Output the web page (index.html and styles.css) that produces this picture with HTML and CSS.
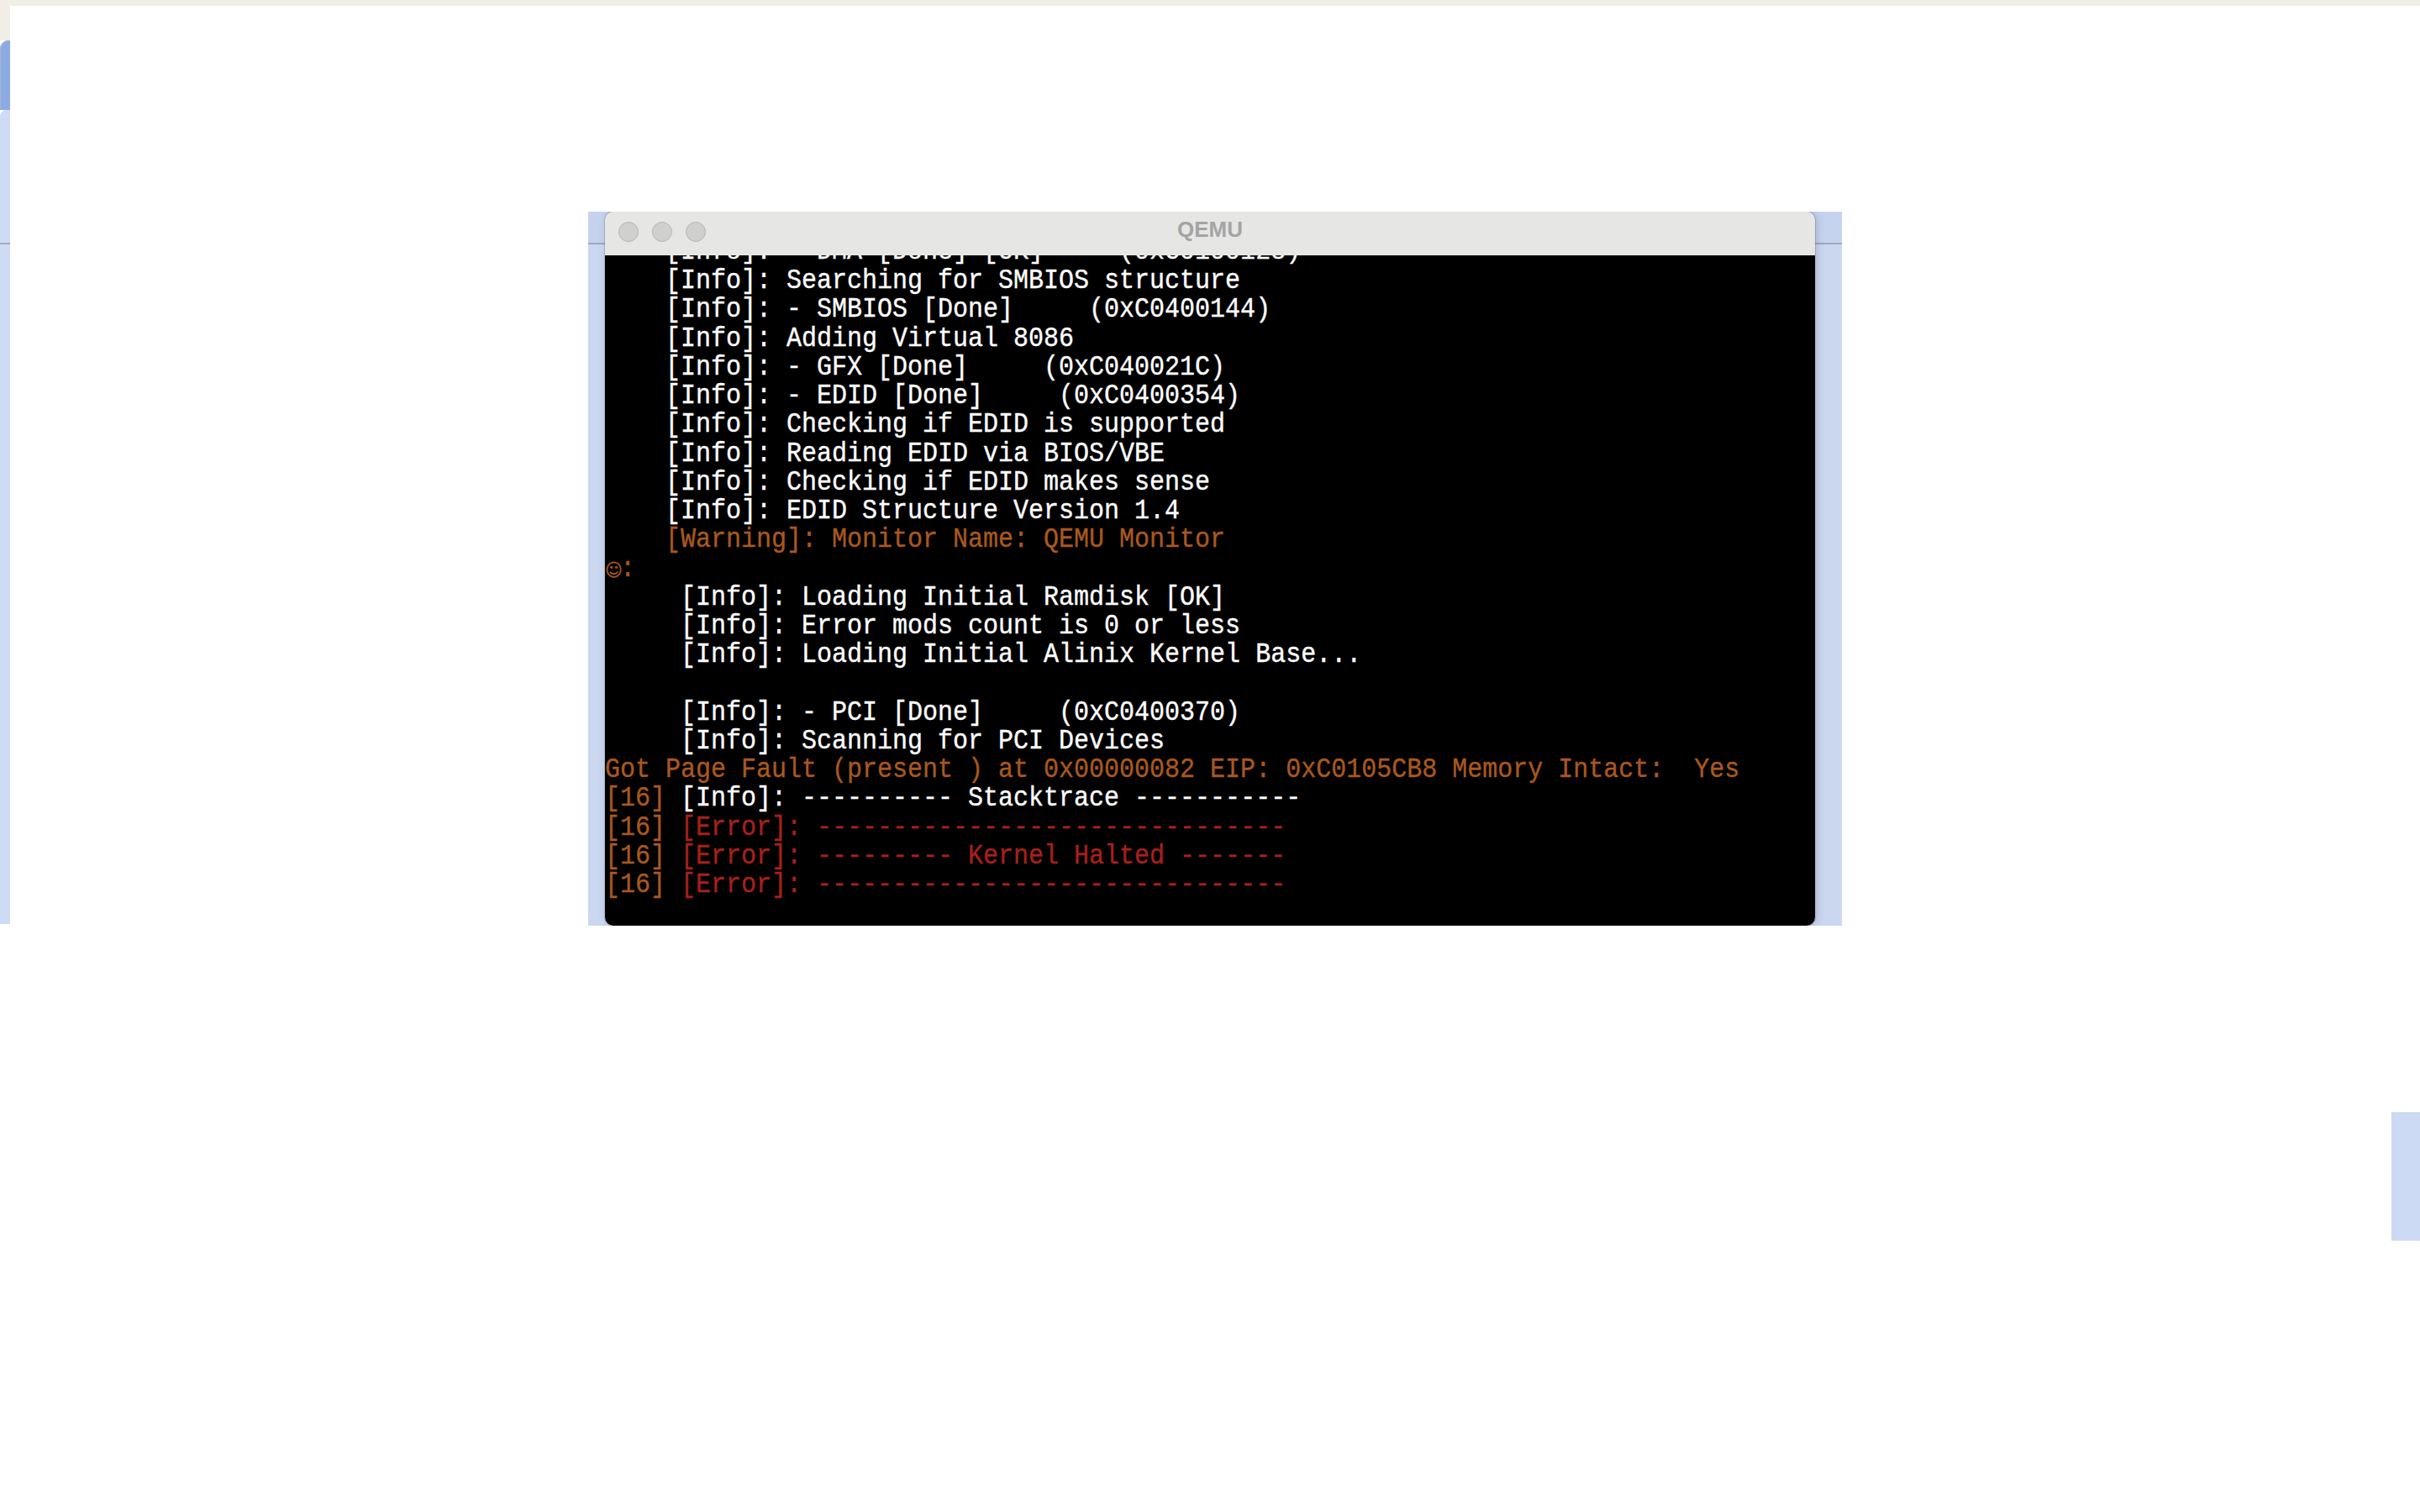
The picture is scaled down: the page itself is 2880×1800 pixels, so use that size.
FILE: index.html
```html
<!DOCTYPE html>
<html lang="en">
<head>
<meta charset="utf-8">
<title>QEMU</title>
<link rel="stylesheet" href="styles.css">
</head>
<body>
<div class="topbar"></div>
<div class="stage">
  <div class="leftstrip">
    <div class="ls-beige"></div>
    <div class="ls-dark"></div>
    <div class="ls-light"></div>
  </div>
  <div class="main">
    <div class="backdrop">
      <div class="window">
        <div class="titlebar">
          <div class="lights">
            <span class="light"></span>
            <span class="light"></span>
            <span class="light"></span>
          </div>
          <div class="title">QEMU</div>
          <div class="spacer"></div>
        </div>
        <div class="terminal">
          <div class="lines">
            <div class="ln ln-top">    [Info]: - DMA [Done] [OK]     (0xC0100128)</div>
            <div class="ln">    [Info]: Searching for SMBIOS structure</div>
            <div class="ln">    [Info]: - SMBIOS [Done]     (0xC0400144)</div>
            <div class="ln">    [Info]: Adding Virtual 8086</div>
            <div class="ln">    [Info]: - GFX [Done]     (0xC040021C)</div>
            <div class="ln">    [Info]: - EDID [Done]     (0xC0400354)</div>
            <div class="ln">    [Info]: Checking if EDID is supported</div>
            <div class="ln">    [Info]: Reading EDID via BIOS/VBE</div>
            <div class="ln">    [Info]: Checking if EDID makes sense</div>
            <div class="ln">    [Info]: EDID Structure Version 1.4</div>
            <div class="ln warn">    [Warning]: Monitor Name: QEMU Monitor</div>
            <div class="ln warn"><span class="smiley">☺</span>:</div>
            <div class="ln">     [Info]: Loading Initial Ramdisk [OK]</div>
            <div class="ln">     [Info]: Error mods count is 0 or less</div>
            <div class="ln">     [Info]: Loading Initial Alinix Kernel Base...</div>
            <div class="ln"> </div>
            <div class="ln">     [Info]: - PCI [Done]     (0xC0400370)</div>
            <div class="ln">     [Info]: Scanning for PCI Devices</div>
            <div class="ln warn">Got Page Fault (present ) at 0x00000082 EIP: 0xC0105CB8 Memory Intact:  Yes</div>
            <div class="ln"><span class="warn">[16]</span> [Info]: ---------- Stacktrace -----------</div>
            <div class="ln err"><span class="warn">[16]</span> [Error]: -------------------------------</div>
            <div class="ln err"><span class="warn">[16]</span> [Error]: --------- Kernel Halted -------</div>
            <div class="ln err"><span class="warn">[16]</span> [Error]: -------------------------------</div>
          </div>
        </div>
      </div>
    </div>
    <div class="side-tab"></div>
  </div>
</div>
</body>
</html>
```

FILE: styles.css
```css
html, body {
  margin: 0;
  padding: 0;
  background: #ffffff;
}

body {
  width: 2880px;
  height: 1800px;
  overflow: hidden;
  font-family: "Liberation Sans", Arial, sans-serif;
}

.topbar {
  height: 7px;
  background: #f1eee7;
}

.stage {
  display: flex;
  align-items: flex-start;
}

.leftstrip {
  width: 12px;
  display: flex;
  flex-direction: column;
}

.ls-beige {
  height: 41px;
  background: #f1eee7;
}

.ls-dark {
  height: 83px;
  background: #8cabe5;
  border-top-left-radius: 10px;
  box-shadow: inset 1px 1px 0 #a9b5c8;
}

.ls-light {
  height: 969px;
  background: linear-gradient(to bottom, #cddcf4 0, #cddcf4 158px, #a3abbb 158px, #a3abbb 160px, #cddcf4 160px);
  border-top-left-radius: 8px;
}

.main {
  flex: 1;
  display: flex;
  flex-direction: column;
}

.backdrop {
  margin: 245px 0 0 688px;
  width: 1492px;
  height: 850px;
  padding-left: 20px;
  box-sizing: border-box;
  overflow: hidden;
  background: linear-gradient(to bottom, #c5d3ee 0, #c5d3ee 37px, #9ea8b9 37px, #9ea8b9 39px, #cad7ef 39px);
}

.window {
  width: 1440px;
  height: 850px;
  border-radius: 10px;
  overflow: hidden;
  box-shadow: 0 0 0 1px rgba(90, 100, 120, 0.25), 2px 0 10px rgba(60, 70, 90, 0.25);
  display: flex;
  flex-direction: column;
}

.titlebar {
  height: 52px;
  flex: none;
  background: #e6e6e4;
  display: grid;
  grid-template-columns: 1fr auto 1fr;
}

.lights {
  display: flex;
  gap: 16px;
  padding: 12px 0 0 16px;
}

.light {
  width: 22px;
  height: 22px;
  border-radius: 50%;
  background: #d0d0ce;
  border: 1px solid #b6b6b4;
}

.title {
  padding-top: 8px;
  font-family: "Liberation Sans", Arial, sans-serif;
  font-weight: bold;
  font-size: 26px;
  line-height: 26px;
  color: #a4a4a4;
}

.terminal {
  flex: 1;
  background: #000000;
  overflow: hidden;
}

.lines {
  margin-top: -21px;
  font-family: "Liberation Mono", "Courier New", monospace;
  font-size: 30px;
  line-height: 34.24px;
  color: #ffffff;
}

.ln {
  height: 34.24px;
  white-space: pre;
  transform: scaleY(1.08);
  -webkit-text-stroke: 0.35px currentColor;
}

.ln-top {
  transform: none;
}

.warn {
  color: #a9581e;
}

.err {
  color: #a8201a;
}

.smiley {
  display: inline-block;
  width: 18px;
  text-align: center;
  font-family: "DejaVu Sans", sans-serif;
  font-size: 20px;
}

.side-tab {
  width: 34px;
  height: 153px;
  margin: 222px 0 0 auto;
  background: #ccdbf3;
}
```
